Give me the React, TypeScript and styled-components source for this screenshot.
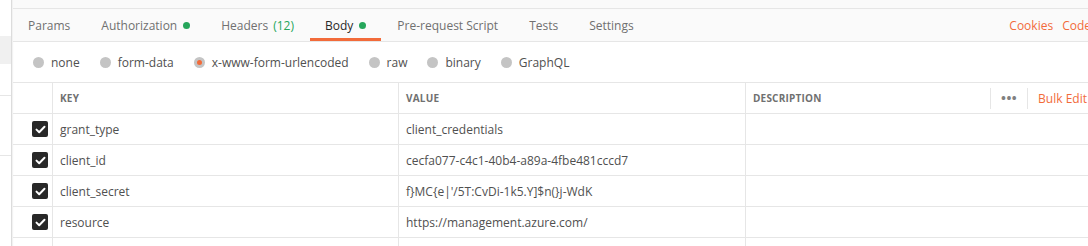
import * as React from 'react';
import styled, { createGlobalStyle } from 'styled-components';

const ORANGE = '#f26b3a';
const GREEN = '#26a65b';
const LINE = '#e6e6e6';

const GlobalStyle = createGlobalStyle`
  html, body {
    margin: 0;
    padding: 0;
    background: #ffffff;
  }
  body {
    font-family: "Open Sans", "Liberation Sans", sans-serif;
    color: #505050;
    overflow: hidden;
  }
`;

const Page = styled.div`
  display: flex;
  width: 1088px;
  height: 246px;
  overflow: hidden;
`;

const Sidebar = styled.div`
  width: 11px;
  flex-shrink: 0;
  display: flex;
  flex-direction: column;
  border-right: 1px solid #dcdcdc;
  box-shadow: 1px 0 1px rgba(0, 0, 0, 0.05);
`;

const SidebarBlock = styled.div<{ $h: number; $bg?: string; $line?: boolean }>`
  height: ${({ $h }) => $h}px;
  background: ${({ $bg }) => $bg ?? '#ffffff'};
  border-bottom: ${({ $line }) => ($line ? `1px solid ${LINE}` : 'none')};
  flex-shrink: 0;
`;

const Main = styled.div`
  flex: 1;
  min-width: 0;
  display: flex;
  flex-direction: column;
  margin-left: 1px;
  & > * {
    flex-shrink: 0;
  }
`;

const TopStrip = styled.div`
  height: 8px;
  background: #fafafa;
  border-bottom: 1px solid ${LINE};
`;

const TabBar = styled.div`
  height: 32px;
  display: flex;
  align-items: stretch;
  background: #fafafa;
  border-bottom: 1px solid ${LINE};
`;

const Tab = styled.div<{ $active?: boolean }>`
  display: flex;
  align-items: center;
  padding: 3px 15px 0 15px;
  margin-right: 1px;
  font-size: 12px;
  color: ${({ $active }) => ($active ? '#282828' : '#707070')};
  border-bottom: 3px solid ${({ $active }) => ($active ? ORANGE : 'transparent')};
  white-space: nowrap;
`;

const Dot = styled.span`
  width: 7px;
  height: 7px;
  border-radius: 50%;
  background: ${GREEN};
  margin-left: 6px;
  display: inline-block;
`;

const Count = styled.span`
  color: ${GREEN};
  margin-left: 5px;
`;

const Spacer = styled.div`
  flex: 1;
`;

const TabLink = styled.div<{ $last?: boolean }>`
  display: flex;
  align-items: center;
  font-size: 12px;
  color: ${ORANGE};
  margin-right: ${({ $last }) => ($last ? '-3px' : '9px')};
  white-space: nowrap;
`;

const BodyTypes = styled.div`
  height: 40px;
  display: flex;
  align-items: center;
  padding-left: 20px;
  border-bottom: 1px solid ${LINE};
`;

const RadioOption = styled.label`
  display: flex;
  align-items: center;
  font-size: 12px;
  color: #505050;
  margin-right: 20px;
  white-space: nowrap;
`;

const RadioCircle = styled.span<{ $checked?: boolean }>`
  width: 11px;
  height: 11px;
  border-radius: 50%;
  background: #c4c4c4;
  margin-right: 7px;
  display: flex;
  align-items: center;
  justify-content: center;
  &::after {
    content: '';
    width: 5px;
    height: 5px;
    border-radius: 50%;
    background: ${({ $checked }) => ($checked ? ORANGE : 'transparent')};
  }
`;

const Table = styled.div`
  display: grid;
  grid-template-columns: 40px 346px 347px 1fr;
  grid-auto-rows: 31px;
`;

const Cell = styled.div<{ $last?: boolean }>`
  display: flex;
  align-items: center;
  border-bottom: 1px solid ${LINE};
  border-right: ${({ $last }) => ($last ? 'none' : `1px solid ${LINE}`)};
  padding-left: 7px;
  font-size: 12px;
  color: #505050;
  white-space: nowrap;
  overflow: hidden;
`;

const CheckCell = styled(Cell)`
  justify-content: flex-end;
  padding-left: 0;
  padding-right: 4px;
`;

const HeadCell = styled(Cell)`
  font-size: 10px;
  font-weight: 700;
  color: #707070;
  letter-spacing: 0.2px;
`;

const HeadActions = styled.div`
  margin-left: auto;
  display: flex;
  align-items: center;
  height: 100%;
`;

const HeadDivider = styled.span`
  width: 1px;
  height: 21px;
  background: ${LINE};
`;

const More = styled.span`
  width: 36px;
  text-align: center;
  color: #808080;
  font-size: 13px;
  letter-spacing: 0.5px;
`;

const BulkEdit = styled.span`
  color: ${ORANGE};
  font-size: 12px;
  font-weight: 400;
  margin-left: 10px;
  margin-right: 1px;
  letter-spacing: 0;
`;

const CheckBox = styled.span`
  width: 16px;
  height: 16px;
  border-radius: 2px;
  background: #282828;
  display: flex;
  align-items: center;
  justify-content: center;
`;

const rows = [
  ['grant_type', 'client_credentials'],
  ['client_id', 'cecfa077-c4c1-40b4-a89a-4fbe481cccd7'],
  ['client_secret', "f}MC{e|'/5T:CvDi-1k5.Y]$n(}j-WdK"],
  ['resource', 'https://management.azure.com/'],
];

const tabs = ['Params', 'Authorization', 'Headers', 'Body', 'Pre-request Script', 'Tests', 'Settings'];

const Check = () => (
  <CheckBox>
    <svg width="11" height="9" viewBox="0 0 11 9">
      <path d="M1.5 4.6 L4.2 7.2 L9.5 1.8" fill="none" stroke="#ffffff" strokeWidth="2" strokeLinecap="round" strokeLinejoin="round" />
    </svg>
  </CheckBox>
);

export default function App() {
  return (
    <Page>
      <GlobalStyle />
      <Sidebar>
        <SidebarBlock $h={36} />
        <SidebarBlock $h={28} $bg="#f0f0f0" />
        <SidebarBlock $h={31} $line />
        <SidebarBlock $h={59} $line />
      </Sidebar>
      <Main>
        <TopStrip />
        <TabBar>
          {tabs.map((t) => (
            <Tab key={t} $active={t === 'Body'}>
              {t}
              {(t === 'Authorization' || t === 'Body') && <Dot />}
              {t === 'Headers' && <Count>(12)</Count>}
            </Tab>
          ))}
          <Spacer />
          <TabLink>Cookies</TabLink>
          <TabLink $last>Code</TabLink>
        </TabBar>
        <BodyTypes>
          {['none', 'form-data', 'x-www-form-urlencoded', 'raw', 'binary', 'GraphQL'].map((o) => (
            <RadioOption key={o}>
              <RadioCircle $checked={o === 'x-www-form-urlencoded'} />
              {o}
            </RadioOption>
          ))}
        </BodyTypes>
        <Table>
          <CheckCell />
          <HeadCell>KEY</HeadCell>
          <HeadCell>VALUE</HeadCell>
          <HeadCell $last>
            DESCRIPTION
            <HeadActions>
              <HeadDivider />
              <More>•••</More>
              <HeadDivider />
              <BulkEdit>Bulk Edit</BulkEdit>
            </HeadActions>
          </HeadCell>
          {rows.map(([k, v]) => (
            <React.Fragment key={k}>
              <CheckCell>
                <Check />
              </CheckCell>
              <Cell>{k}</Cell>
              <Cell>{v}</Cell>
              <Cell $last />
            </React.Fragment>
          ))}
          <CheckCell />
          <Cell />
          <Cell />
          <Cell $last />
        </Table>
      </Main>
    </Page>
  );
}
